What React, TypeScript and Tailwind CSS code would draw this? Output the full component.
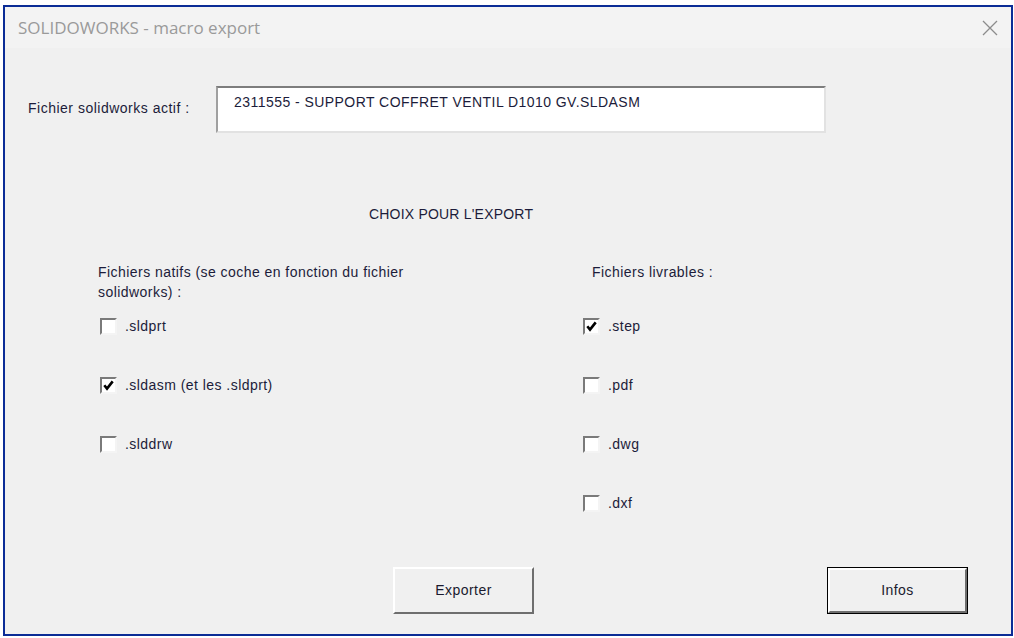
import React from "react";

type Box = { label: string; checked?: boolean };

const natifs: Box[] = [
  { label: ".sldprt" },
  { label: ".sldasm (et les .sldprt)", checked: true },
  { label: ".slddrw" },
];

const livrables: Box[] = [
  { label: ".step", checked: true },
  { label: ".pdf" },
  { label: ".dwg" },
  { label: ".dxf" },
];

function CheckBox({ label, checked }: Box) {
  return (
    <div className="flex h-[18px] items-center">
      <div className="flex h-[17px] w-[17px] items-center justify-center border-2 border-t-[#7a7a7a] border-l-[#7a7a7a] border-r-[#f4f4f4] border-b-[#f4f4f4] bg-white">
        {checked && (
          <svg width="11" height="11" viewBox="0 0 11 11">
            <path d="M1.3 5.3 L4 8.6 L9.7 1.4" fill="none" stroke="#000" strokeWidth="2.6" />
          </svg>
        )}
      </div>
      <span className="ml-[8px] text-[14px] tracking-[0.45px] text-[#1c1c3a]">{label}</span>
    </div>
  );
}

function Button({ label, isDefault }: { label: string; isDefault?: boolean }) {
  return (
    <button
      className={
        "h-[47px] w-[141px] " +
        (isDefault ? "border border-black p-0" : "border-0 p-0")
      }
    >
      <div className="flex h-full w-full items-center justify-center border-2 border-t-white border-l-white border-r-[#6e6e6e] border-b-[#6e6e6e] bg-[#f0f0f0] text-[14px] tracking-[0.45px] text-[#1a1a2e]">
        {label}
      </div>
    </button>
  );
}

export default function App() {
  return (
    <div
      className="h-[638px] w-[1014px] bg-white pl-[3px] pt-[5px]"
      style={{ fontFamily: '"Liberation Sans", Arial, sans-serif' }}
    >
      <div className="flex h-[631px] w-[1010px] flex-col border-2 border-[#0b2c96] bg-[#f0f0f0]">
        {/* barre de titre */}
        <div className="flex h-[41px] items-center justify-between bg-[#f3f3f3] pl-[13px] pr-[13px]">
          <span
            className="text-[17px] text-[#9a9a9a]"
            style={{ fontFamily: '"Open Sans", "Noto Sans", sans-serif' }}
          >
            SOLIDOWORKS - macro export
          </span>
          <svg width="16" height="16" viewBox="0 0 16 16">
            <path d="M1 1 L15 15 M15 1 L1 15" stroke="#8c8c8c" strokeWidth="1.3" />
          </svg>
        </div>

        {/* fichier actif */}
        <div className="mt-[38px] flex items-center pl-[23px] tracking-[0.5px]">
          <span className="w-[188px] pb-[2px] text-[14px] text-[#1c1c3a]">
            Fichier solidworks actif :
          </span>
          <div className="h-[47px] w-[610px] border-2 border-t-[#7d7d7d] border-l-[#a0a0a0] border-r-[#e2e2e2] border-b-[#e2e2e2] bg-white pl-[16px] pt-[4px] text-[14px] tracking-[0.45px] text-[#1c1c3a]">
            2311555 - SUPPORT COFFRET VENTIL D1010 GV.SLDASM
          </div>
        </div>

        <div className="mt-[73px] pl-[364px] text-[14px] leading-[16px] tracking-[0.2px] text-[#1c1c3a]">
          CHOIX POUR L'EXPORT
        </div>

        {/* colonnes */}
        <div className="mt-[40px] flex tracking-[0.45px]">
          <div className="ml-[93px] w-[485px]">
            <p className="w-[360px] text-[14px] leading-[20px] text-[#1c1c3a]">
              Fichiers natifs (se coche en fonction du fichier solidworks) :
            </p>
            <div className="mt-[15px] flex flex-col gap-[41px] pl-[2px]">
              {natifs.map((b) => (
                <CheckBox key={b.label} {...b} />
              ))}
            </div>
          </div>
          <div>
            <p className="pl-[9px] text-[14px] leading-[20px] text-[#1c1c3a]">
              Fichiers livrables :
            </p>
            <div className="mt-[35px] flex flex-col gap-[41px]">
              {livrables.map((b) => (
                <CheckBox key={b.label} {...b} />
              ))}
            </div>
          </div>
        </div>

        {/* boutons */}
        <div className="mt-[55px] flex">
          <div className="ml-[388px]">
            <Button label="Exporter" />
          </div>
          <div className="ml-[293px]">
            <Button label="Infos" isDefault />
          </div>
        </div>
      </div>
    </div>
  );
}
